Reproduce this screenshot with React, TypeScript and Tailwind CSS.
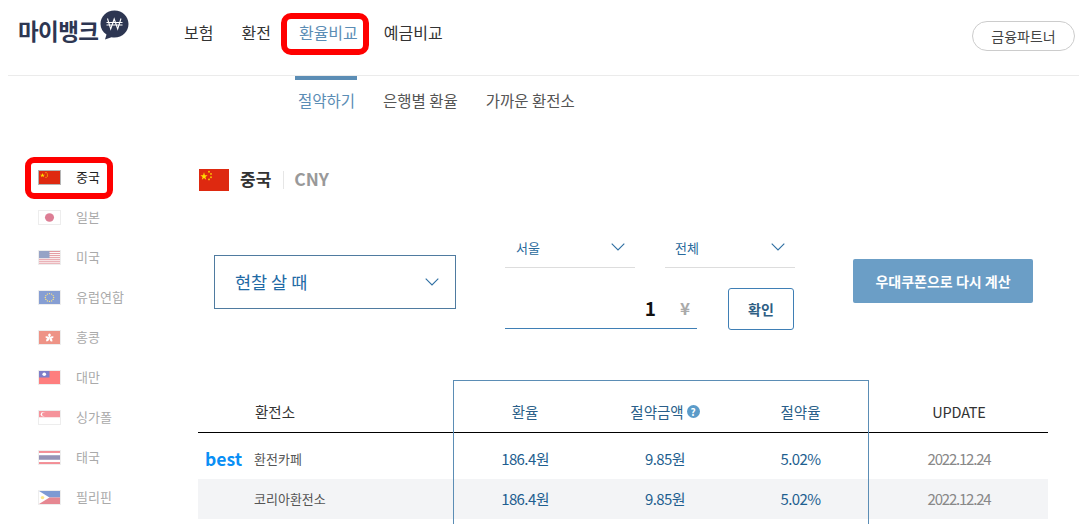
import React from "react";

const Chevron = ({ w = 14, h = 8, color = "#2f6fa3" }: { w?: number; h?: number; color?: string }) => (
  <svg width={w} height={h} viewBox="0 0 14 8" fill="none" className="shrink-0">
    <path d="M0.7 0.7 L7 7 L13.3 0.7" stroke={color} strokeWidth="1.1" />
  </svg>
);

const Flag = ({ code, w = 23, h = 15 }: { code: string; w?: number; h?: number }) => {
  const art: Record<string, React.ReactNode> = {
    cn: (
      <>
        <rect width="30" height="20" fill="#de2910" />
        <path d="M5 3l.9 2.6h2.7L6.4 7.2l.8 2.6L5 8.2 2.8 9.800l.8-2.600L1.400 5.600h2.700z" fill="#ffde00" />
        <circle cx="10" cy="2.500" r=".8" fill="#ffde00" /><circle cx="12" cy="4.500" r=".8" fill="#ffde00" />
        <circle cx="12" cy="7.500" r=".8" fill="#ffde00" /><circle cx="10" cy="9.500" r=".8" fill="#ffde00" />
      </>
    ),
    jp: (<><rect width="30" height="20" fill="#fff" /><circle cx="15" cy="10" r="6.500" fill="#bc002d" /></>),
    us: (
      <>
        <rect width="30" height="20" fill="#fff" />
        {[0, 3, 6, 9, 12, 15, 18].map((y) => (<rect key={y} y={y} width="30" height="1.500" fill="#c8303f" />))}
        <rect width="15" height="11" fill="#2f4a8f" />
      </>
    ),
    eu: (
      <>
        <rect width="30" height="20" fill="#0f3fa8" />
        {Array.from({ length: 12 }).map((_, i) => (
          <circle key={i} cx={15 + 6 * Math.cos((i * Math.PI) / 6)} cy={10 + 6 * Math.sin((i * Math.PI) / 6)} r="1" fill="#ffcc00" />
        ))}
      </>
    ),
    hk: (
      <>
        <rect width="30" height="20" fill="#de2910" />
        <path d="M15 4c3 1 2 4 0 6c-2-2-3-5 0-6zM21 9c-1 3-4 3-6 1c2-2 5-3 6-1zM19 16c-3 1-4-2-4-6c3 1 5 3 4 6zM11 16c-2-2 0-5 4-6c0 3-1 6-4 6zM9 9c1-2 4-1 6 1c-2 2-5 2-6-1z" fill="#fff" />
      </>
    ),
    tw: (
      <>
        <rect width="30" height="20" fill="#fe0000" />
        <rect width="15" height="10" fill="#000095" />
        <circle cx="7.500" cy="5" r="2.600" fill="#fff" />
      </>
    ),
    sg: (
      <>
        <rect width="30" height="10" fill="#ed2939" />
        <rect y="10" width="30" height="10" fill="#fff" />
        <circle cx="6" cy="5" r="3.500" fill="#fff" />
        <circle cx="7.500" cy="5" r="3.200" fill="#ed2939" />
      </>
    ),
    th: (
      <>
        <rect width="30" height="20" fill="#fff" />
        <rect width="30" height="3" fill="#e8202f" /><rect y="17" width="30" height="3" fill="#e8202f" />
        <rect y="6.500" width="30" height="7" fill="#2d2a70" />
      </>
    ),
    ph: (
      <>
        <rect width="30" height="10" fill="#0038a8" />
        <rect y="10" width="30" height="10" fill="#ce1126" />
        <path d="M0 0L15 10L0 20z" fill="#fff" />
        <circle cx="5" cy="10" r="2.500" fill="#fcd116" />
      </>
    ),
  };
  return (
    <svg width={w} height={h} viewBox="0 0 30 20" preserveAspectRatio="none" className="block">
      {art[code]}
    </svg>
  );
};

const countries = [
  ["cn", "중국"], ["jp", "일본"], ["us", "미국"], ["eu", "유럽연합"], ["hk", "홍콩"],
  ["tw", "대만"], ["sg", "싱가폴"], ["th", "태국"], ["ph", "필리핀"],
];

const rows = [
  { name: "환전카페", best: true, bg: "", pad: "pt-[6px] h-[46px]" },
  { name: "코리아환전소", best: false, bg: "bg-[#f3f4f6]", pad: "h-[40px]" },
];

export default function App() {
  return (
    <div className="relative w-[1079px] h-[524px] overflow-hidden bg-white text-[#333] font-['Noto_Sans_CJK_KR','Noto_Sans',sans-serif]">
      {/* header */}
      <header className="ml-[8px] h-[76px] border-b border-[#ebebeb] flex items-start">
        <div className="ml-[10px] mt-[10px] w-[166px] flex items-start">
          <span className="mt-[4px] text-[22.500px] leading-[32px] font-bold tracking-[-0.6px] text-[#2d3652]">마이뱅크</span>
          <svg width="29" height="30" viewBox="0 0 29 30" className="ml-[2px]">
            <path d="M14.500 0.500C22.500 0.500 28.500 6.500 28.500 14C28.500 21.500 22.500 27.500 14.500 27.500C13.500 27.500 12.500 27.400 11.500 27.200L5 29.500L6.500 24.500C2.800 22 0.500 18.300 0.500 14C0.500 6.500 6.500 0.500 14.500 0.500Z" fill="#2d3652" />
            <path d="M7.500 8.500L10.700 19L14.200 9L17.700 19L21 8.500M6.500 12.500H22.500M6.500 15H22.500" stroke="#fff" strokeWidth="1.100" fill="none" />
          </svg>
        </div>
        <nav className="flex items-start text-[16px] leading-[22px] mt-[21px] text-[#333]">
          <span>보험</span>
          <span className="ml-[28px]">환전</span>
          <span className="relative ml-[28px] text-[#5b8db5]">
            환율비교
            <span className="absolute left-[-18px] top-[-8px] w-[88px] h-[42px] border-[6px] border-[#ff0000] rounded-[10px]" />
          </span>
          <span className="ml-[26px]">예금비교</span>
        </nav>
        <div className="ml-auto mt-[21px] mr-[4px] w-[103px] h-[30px] rounded-full border border-[#cccccc] flex items-center justify-center text-[14px] text-[#444]">
          금융파트너
        </div>
      </header>

      {/* sub nav */}
      <div className="h-[81px] flex items-start pl-[295px]">
        <div className="w-[62px] border-t-[4px] border-[#5b8db5] pt-[9px] pl-[1px] text-[15.500px] leading-[22px] text-[#5b8db5] text-center">절약하기</div>
        <span className="ml-[26px] mt-[13px] text-[15.500px] leading-[22px] text-[#555]">은행별 환율</span>
        <span className="ml-[28px] mt-[13px] text-[15.500px] leading-[22px] text-[#555]">가까운 환전소</span>
      </div>

      {/* body */}
      <div className="flex items-start">
        <aside className="w-[198px] pl-[38px]">
          {countries.map(([code, label], i) => (
            <div key={code} className="relative h-[40px] flex items-center">
              <span className={`border ${i === 0 ? "border-[#b5b5b5]" : "border-[#dddddd] opacity-50"} shrink-0`}>
                <Flag code={code} w={21} h={13} />
              </span>
              <span className={`ml-[15px] text-[13px] ${i === 0 ? "text-[#222]" : "text-[#aaaaaa]"}`}>{label}</span>
              {i === 0 && (
                <span className="absolute left-[-13px] top-0 w-[88px] h-[42px] border-[6px] border-[#ff0000] rounded-[9px]" />
              )}
            </div>
          ))}
        </aside>

        <main className="w-[850px]">
          {/* title */}
          <div className="mt-[12px] h-[22px] flex items-center">
            <span className="ml-[1px]"><Flag code="cn" w={30} h={22} /></span>
            <span className="ml-[11px] mt-[-2px] text-[17px] font-bold text-[#333]">중국</span>
            <span className="ml-[12px] w-px h-[18px] bg-[#e6e6e6]" />
            <span className="ml-[10px] mt-[-2px] text-[17.500px] font-bold text-[#999999]">CNY</span>
          </div>

          {/* controls */}
          <div className="mt-[39px] h-[150px] flex items-start">
            <div className="ml-[16px] mt-[25px] w-[242px] h-[54px] border border-[#4f7ba0] flex items-center justify-between pl-[20px] pr-[16px]">
              <span className="pt-[1px] text-[17.500px] text-[#1f6aa5]">현찰 살 때</span>
              <Chevron />
            </div>
            <div className="ml-[49px] w-[290px]">
              <div className="flex gap-[30px]">
                {["서울", "전체"].map((t, i) => (
                  <div key={t} className={`w-[130px] h-[38px] border-b border-[#dddddd] flex items-start justify-between ${i === 0 ? "pl-[11px]" : "pl-[10px]"} pr-[10px] pt-[7px]`}>
                    <span className="text-[13px] leading-[22px] text-[#2a6a9c]">{t}</span>
                    <span className="mt-[6px]"><Chevron /></span>
                  </div>
                ))}
              </div>
              <div className="mt-[20px] flex items-start">
                <div className="w-[192px] h-[41px] border-b border-[#3f7fb5] flex items-center justify-end pr-[7px]">
                  <span className="text-[19px] font-bold text-[#111]">1</span>
                  <span className="ml-[24px] text-[17px] font-bold text-[#aaaaaa]">¥</span>
                </div>
                <div className="ml-[31px] w-[66px] h-[42px] border border-[#3f7fb5] rounded-[3px] flex items-center justify-center text-[14px] font-bold text-[#2f5f85]">확인</div>
              </div>
            </div>
            <div className="ml-[58px] mt-[29px] w-[180px] h-[44px] rounded-[2px] bg-[#6b9ec6] flex items-center justify-center text-[14px] font-bold text-white">
              우대쿠폰으로 다시 계산
            </div>
          </div>

          {/* table */}
          <div className="relative">
            <div className="flex h-[53px] border-b border-black items-center text-[14.500px] text-[#2a5f8a] text-center pt-[11px]">
              <div className="w-[255px] pl-[57px] text-left text-[#333]">환전소</div>
              <div className="w-[144px]">환율</div>
              <div className="w-[136px] flex items-center justify-center gap-[3px]">
                절약금액
                <span className="w-[13px] h-[13px] rounded-full bg-[#5b9bc9] text-white text-[10px] font-bold leading-[13px]">?</span>
              </div>
              <div className="w-[135px]">절약율</div>
              <div className="w-[180px] pl-[2px] tracking-[-0.2px] text-[#333]">UPDATE</div>
            </div>
            {rows.map((r) => (
              <div key={r.name} className={`flex items-center text-center text-[15px] tracking-[-0.6px] text-[#1f5f90] ${r.bg} ${r.pad}`}>
                <div className="w-[255px] flex items-center text-left">
                  <span className="ml-[7px] w-[49px] text-[17.500px] leading-[24px] font-bold tracking-normal text-[#0a8ff5]">{r.best ? "best" : ""}</span>
                  <span className="text-[13px] tracking-normal text-[#555]">{r.name}</span>
                </div>
                <div className="w-[144px]">186.4원</div>
                <div className="w-[136px]">9.85원</div>
                <div className="w-[135px]">5.02%</div>
                <div className="w-[180px] pl-[2px] tracking-[-1.2px] text-[#888888]">2022.12.24</div>
              </div>
            ))}
            <div className="absolute left-[255px] top-0 w-[416px] h-[160px] border border-[#5b8db5] pointer-events-none" />
          </div>
        </main>
      </div>
    </div>
  );
}
